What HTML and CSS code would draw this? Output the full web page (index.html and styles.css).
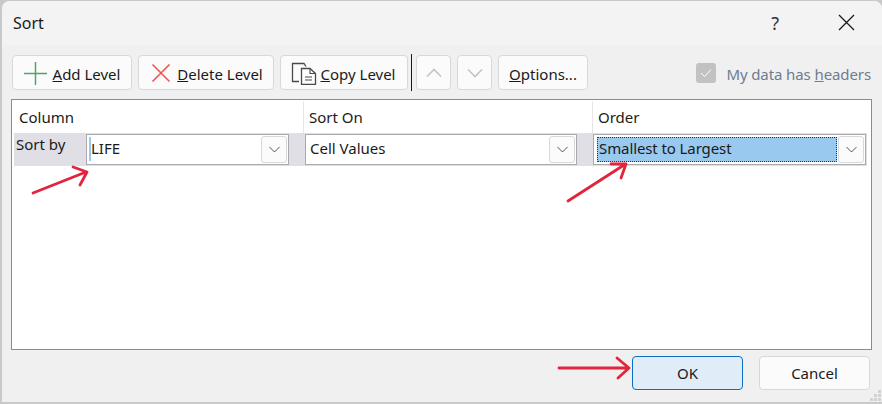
FILE: index.html
```html
<!DOCTYPE html>
<html lang="en">
<head>
<meta charset="utf-8">
<title>Sort</title>
<link rel="stylesheet" href="styles.css">
</head>
<body>
<div class="dialog">
  <header class="titlebar">
    <span class="title">Sort</span>
    <div class="title-actions">
      <span class="help">?</span>
      <svg class="close" width="17" height="17" viewBox="0 0 17 17"><path d="M1 1L16 16M16 1L1 16" stroke="#1a1a1a" stroke-width="1.3" fill="none"/></svg>
    </div>
  </header>
  <div class="toolbar">
    <button class="btn btn-add">
      <svg width="24" height="24" viewBox="0 0 24 24"><path d="M0 12.5H23M11.5 1V24" stroke="#4ea564" stroke-width="1.5" fill="none"/></svg>
      <span class="btn-text"><u>A</u>dd Level</span>
    </button>
    <button class="btn btn-del">
      <svg width="20" height="20" viewBox="0 0 20 20"><path d="M1.5 1.5L18.5 18.5M18.5 1.5L1.5 18.5" stroke="#ef5350" stroke-width="1.6" fill="none"/></svg>
      <span class="btn-text"><u>D</u>elete Level</span>
    </button>
    <button class="btn btn-copy">
      <svg width="28" height="24" viewBox="0 0 28 24"><path d="M10 2.5H1.5V20.5H8M9.5 2.5H13L15 5.5" stroke="#4a4a4a" stroke-width="1.3" fill="none"/><path d="M10.5 7.5H19L24.5 12.5V23.5H10.5Z" stroke="#4a4a4a" stroke-width="1.3" fill="#fdfdfd"/><path d="M19 7.5V12.5H24.5M14 16H21M14 19H21" stroke="#4a4a4a" stroke-width="1.1" fill="none"/></svg>
      <span class="btn-text"><u>C</u>opy Level</span>
    </button>
    <span class="sep"></span>
    <button class="btn btn-icon">
      <svg width="16" height="10" viewBox="0 0 16 10"><path d="M1 8.5L8 1.5L15 8.5" stroke="#c4c4c4" stroke-width="1.6" fill="none"/></svg>
    </button>
    <button class="btn btn-icon">
      <svg width="16" height="10" viewBox="0 0 16 10"><path d="M1 1.5L8 8.5L15 1.5" stroke="#c4c4c4" stroke-width="1.6" fill="none"/></svg>
    </button>
    <button class="btn btn-options"><span class="btn-text"><u>O</u>ptions...</span></button>
    <label class="headers">
      <span class="check"><svg width="12" height="10" viewBox="0 0 12 10"><path d="M1 5L4.5 8.5L11 1.5" stroke="#fff" stroke-width="1" fill="none"/></svg></span>
      <span class="btn-text headers-text">My data has <u>h</u>eaders</span>
    </label>
  </div>
  <section class="panel">
    <div class="head-row">
      <div class="head head-a">Column</div>
      <div class="head head-b">Sort On</div>
      <div class="head head-c">Order</div>
    </div>
    <div class="level-row">
      <div class="sort-label">Sort by</div>
      <div class="combo combo-a">
        <span class="value value-caret">LIFE</span>
        <span class="drop"><svg width="11" height="7" viewBox="0 0 11 7"><path d="M.5 1L5.5 6L10.5 1" stroke="#555" stroke-width="1" fill="none"/></svg></span>
      </div>
      <span class="cell-gap"></span>
      <div class="combo combo-b">
        <span class="value">Cell Values</span>
        <span class="drop"><svg width="11" height="7" viewBox="0 0 11 7"><path d="M.5 1L5.5 6L10.5 1" stroke="#555" stroke-width="1" fill="none"/></svg></span>
      </div>
      <span class="cell-gap"></span>
      <div class="combo combo-c">
        <span class="value value-selected">Smallest to Largest</span>
        <span class="drop"><svg width="11" height="7" viewBox="0 0 11 7"><path d="M.5 1L5.5 6L10.5 1" stroke="#555" stroke-width="1" fill="none"/></svg></span>
      </div>
    </div>
  </section>
  <footer class="footer">
    <button class="btn btn-ok">OK</button>
    <button class="btn btn-cancel">Cancel</button>
  </footer>
  <svg class="grip" width="12" height="12" viewBox="0 0 12 12"><path d="M8 0h3v3H8zM4 4h3v3H4zM8 4h3v3H8zM0 8h3v3H0zM4 8h3v3H4zM8 8h3v3H8z" fill="#d2d2d2"/></svg>
  <svg class="arrows" width="882" height="404" viewBox="0 0 882 404">
    <g stroke="#e2243c" stroke-width="2.8" fill="none" stroke-linecap="round" stroke-linejoin="round">
      <path d="M33 193L86 172M73 167L87 172L80 185"/>
      <path d="M568 201L624 165M611 164L626 164L621 178"/>
      <path d="M559 368L628 368M617 358L629 368L618 378"/>
    </g>
  </svg>
</div>
</body>
</html>
```
FILE: styles.css
```css
* { box-sizing: border-box; }
html, body { margin: 0; padding: 0; }
body {
  width: 882px;
  height: 404px;
  overflow: hidden;
  background: #c9c9c9;
  font-family: "Noto Sans", "Open Sans", sans-serif;
  font-size: 15px;
  color: #1a1a1a;
}
.dialog {
  position: relative;
  width: 880px;
  height: 401px;
  margin: 1px 0 0 2px;
  background: #f0f0f0;
  border-radius: 8px 8px 0 0;
  overflow: hidden;
  display: flex;
  flex-direction: column;
}
.titlebar {
  height: 44px;
  flex: none;
  background: #f3f3f3;
  display: flex;
  align-items: center;
  justify-content: space-between;
  padding: 0 27px 1px 11px;
}
.title { font-size: 16px; }
.title-actions { display: flex; align-items: center; gap: 56px; }
.help { font-size: 18px; color: #333; margin-right: 3px; }
.close { display: block; }
.toolbar {
  flex: none;
  height: 54px;
  display: flex;
  align-items: center;
  padding: 1px 0 0 10px;
  gap: 6px;
}
.btn {
  height: 35px;
  padding: 0;
  border: 1px solid #d8d8d8;
  border-radius: 4px;
  background: #fbfbfb;
  font: inherit;
  color: #1a1a1a;
  display: flex;
  align-items: center;
  justify-content: center;
}
.btn-text { padding-top: 2px; }
.btn-add { width: 120px; gap: 5px; }
.btn-del { width: 136px; gap: 6px; padding-left: 2px; }
.btn-copy { width: 128px; gap: 1px; padding-right: 1px; }
.btn-icon { width: 35px; }
.btn-options { width: 90px; }
.sep {
  width: 1px;
  height: 37px;
  background: #1a1a1a;
  margin: 0 -2px 0 -3px;
}
.headers {
  margin-left: auto;
  margin-right: 11px;
  display: flex;
  align-items: center;
  gap: 10px;
  color: #6d7d92;
}
.headers-text { letter-spacing: -0.1px; }
.check {
  width: 20px;
  height: 20px;
  background: #c2c2c2;
  border-radius: 3px;
  display: flex;
  align-items: center;
  justify-content: center;
}
.panel {
  flex: none;
  width: 861px;
  height: 251px;
  margin-left: 9px;
  background: #fff;
  border: 1px solid #8c8c8c;
  padding: 1px 0 0 2px;
}
.head-row { display: flex; height: 32px; }
.head {
  display: flex;
  align-items: center;
  padding-left: 5px;
  border-right: 1px solid #e6e6e6;
}
.head-a { width: 290px; }
.head-b { width: 289px; }
.head-c { flex: 1; border-right: 0; }
.level-row {
  display: flex;
  height: 33px;
  width: 853px;
  background: #dfdfe5;
  align-items: center;
}
.sort-label {
  width: 72px;
  height: 100%;
  padding: 1px 0 0 2px;
  flex: none;
}
.combo {
  height: 31px;
  flex: none;
  background: #fff;
  border: 1px solid #a9a9b0;
  display: flex;
  align-items: center;
  justify-content: space-between;
  padding: 1px;
}
.combo-a { width: 203px; }
.combo-b { width: 272px; }
.combo-c { width: 273px; }
.cell-gap { width: 16px; flex: none; }
.value { padding-left: 3px; flex: 1; line-height: 25px; height: 27px; }
.value-caret { position: relative; }
.value-caret::before {
  content: "";
  position: absolute;
  left: 1px;
  top: 1px;
  width: 2px;
  height: 24px;
  background: #99c9ef;
}
.value-selected {
  background: #99c9ef;
  outline: 1px dotted #333;
  outline-offset: -1px;
  margin: 0 1px 0 2px;
  padding-left: 2px;
  height: 25px;
  line-height: 23px;
  letter-spacing: -0.1px;
}
.drop {
  width: 26px;
  height: 27px;
  flex: none;
  background: #fbfbfb;
  border: 1px solid #d8d8d8;
  border-radius: 3px;
  display: flex;
  align-items: center;
  justify-content: center;
}
.footer {
  flex: 1;
  display: flex;
  justify-content: flex-end;
  align-items: flex-start;
  gap: 16px;
  padding: 6px 12px 0 0;
}
.btn-ok {
  width: 111px;
  height: 34px;
  background: #e0edf8;
  border-color: #0a6fc2;
  border-radius: 4px;
}
.btn-cancel { width: 111px; height: 34px; }
.grip { position: absolute; right: 0; bottom: 0; }
.arrows { position: absolute; left: -2px; top: -1px; pointer-events: none; }
```
